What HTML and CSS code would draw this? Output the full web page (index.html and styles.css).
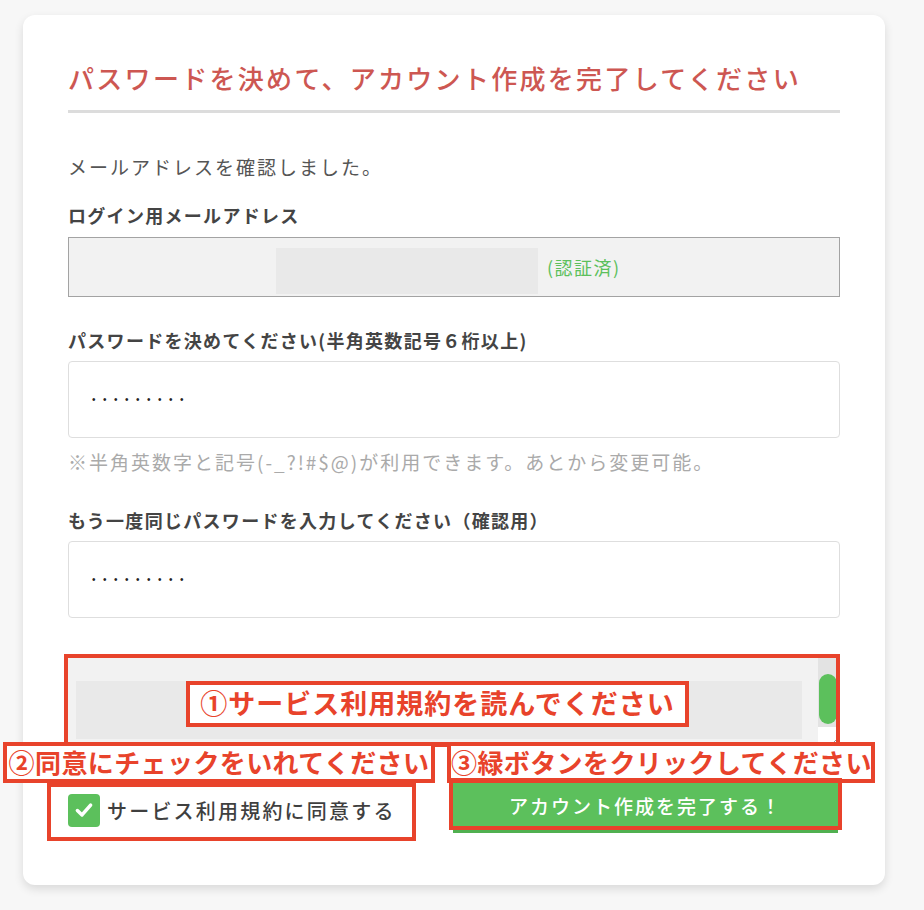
FILE: index.html
```html
<!DOCTYPE html>
<html lang="ja">
<head>
<meta charset="utf-8">
<title>パスワード設定</title>
<link rel="stylesheet" href="styles.css">
</head>
<body>
<div class="page">
  <div class="card">
    <h1 class="title">パスワードを決めて、アカウント作成を完了してください</h1>
    <p class="lead">メールアドレスを確認しました。</p>

    <div class="label label-first">ログイン用メールアドレス</div>
    <div class="email-box">
      <span class="email-mask"></span>
      <span class="verified">(認証済)</span>
    </div>

    <div class="label label-gap">パスワードを決めてください(半角英数記号６桁以上)</div>
    <div class="field"><span class="dots">•••••••••</span></div>
    <p class="hint">※半角英数字と記号(-_?!#$@)が利用できます。あとから変更可能。</p>

    <div class="label label-gap2">もう一度同じパスワードを入力してください（確認用）</div>
    <div class="field"><span class="dots">•••••••••</span></div>

    <div class="terms">
      <div class="terms-body"><div class="terms-mask"></div></div>
      <div class="terms-scroll">
        <div class="track"><div class="thumb"></div></div>
        <div class="corner">
          <svg width="10" height="10" viewBox="0 0 10 10"><path d="M9 3 L3 9 M9 7 L7 9" stroke="#999" stroke-width="1" fill="none"/></svg>
        </div>
      </div>
    </div>

    <div class="actions">
      <label class="agree">
        <span class="check">
          <svg width="22" height="22" viewBox="0 0 20 20"><path d="M4 10.5 L8.2 14.5 L16 5.5" stroke="#fff" stroke-width="3.2" fill="none" stroke-linecap="round" stroke-linejoin="round"/></svg>
        </span>
        <span class="agree-text">サービス利用規約に同意する</span>
      </label>
      <button class="submit" type="button">アカウント作成を完了する！</button>
    </div>

    <div class="note note-1"><div class="note-label note-label-1">①サービス利用規約を読んでください</div></div>
    <div class="note-link"></div>
    <div class="note note-2">②同意にチェックをいれてください</div>
    <div class="note note-3">③緑ボタンをクリックしてください</div>
    <div class="note note-4"></div>
    <div class="note note-5"></div>
  </div>
</div>
</body>
</html>
```

FILE: styles.css
```css
* { box-sizing: border-box; }

html, body {
  margin: 0;
  padding: 0;
  background: #f7f7f7;
}

body {
  font-family: "Noto Sans CJK JP", "Noto Sans", sans-serif;
  color: #555;
}

.page {
  padding: 15px 39px 25px 23px;
}

.card {
  position: relative;
  width: 862px;
  height: 870px;
  background: #fff;
  border-radius: 12px;
  box-shadow: 0 4px 10px rgba(0, 0, 0, 0.12);
  padding: 45px 45px 0 45px;
}

.title {
  margin: 0;
  font-size: 26px;
  line-height: 36px;
  font-weight: 500;
  letter-spacing: 2.3px;
  color: #cd5752;
  padding-bottom: 14px;
  border-bottom: 3px solid #dcdcdc;
  white-space: nowrap;
}

.lead {
  margin: 40px 0 0;
  font-size: 19px;
  line-height: 28px;
  letter-spacing: 2px;
  color: #555;
}

.label {
  font-size: 18px;
  line-height: 26px;
  font-weight: 700;
  letter-spacing: 1.3px;
  color: #444;
  white-space: nowrap;
}

.label-first { margin-top: 21px; }
.label-gap { margin-top: 30px; }
.label-gap2 { margin-top: 32px; }

.email-box {
  margin-top: 9px;
  height: 60px;
  background: #f2f2f2;
  border: 1px solid #a3a3a3;
  display: flex;
  align-items: center;
  padding-left: 207px;
}

.email-mask {
  display: block;
  width: 262px;
  height: 46px;
  margin-top: 8px;
  background: #e9e9e9;
}

.verified {
  margin-left: 9px;
  font-size: 18px;
  letter-spacing: 1.5px;
  color: #5cc05c;
}

.field {
  margin-top: 8px;
  height: 77px;
  border: 1px solid #dedede;
  border-radius: 4px;
  display: flex;
  align-items: center;
  padding-left: 23px;
}

.dots {
  font-family: "Liberation Sans", sans-serif;
  font-size: 10px;
  letter-spacing: 7.5px;
  color: #222;
}

.hint {
  margin: 11px 0 0;
  font-size: 19px;
  line-height: 26px;
  letter-spacing: 2px;
  color: #aaa;
  white-space: nowrap;
}

.terms {
  margin-top: 39px;
  width: 770px;
  height: 89px;
  background: #f2f2f2;
  border-top: 1px solid #e4e4e4;
  display: flex;
}

.terms-body {
  flex: 1;
  padding: 23px 16px 0 8px;
}

.terms-mask {
  height: 58px;
  background: #e9e9e9;
}

.terms-scroll {
  width: 20px;
  display: flex;
  flex-direction: column;
}

.track {
  flex: 1;
  background: #e3e3e3;
  padding: 16px 1px 0;
}

.thumb {
  height: 50px;
  background: #5cc05c;
  border-radius: 9px;
}

.corner {
  height: 19px;
  background: #fff;
  display: flex;
  align-items: flex-end;
  justify-content: flex-end;
}

.actions {
  margin-top: 35px;
  display: flex;
  align-items: center;
  justify-content: space-between;
  padding-right: 2px;
}

.agree {
  display: flex;
  align-items: center;
  margin-top: 6px;
}

.check {
  width: 32px;
  height: 33px;
  background: #5cc05c;
  border-radius: 4px;
  display: flex;
  align-items: center;
  justify-content: center;
}

.agree-text {
  margin-left: 7px;
  font-size: 20px;
  font-weight: 500;
  letter-spacing: 2.2px;
  color: #3f3f3f;
}

.submit {
  width: 385px;
  height: 52px;
  border: 0;
  border-bottom: 3px solid #50b050;
  background: #5cc05c;
  color: #fff;
  font-family: "Noto Sans CJK JP", sans-serif;
  font-size: 19px;
  font-weight: 500;
  letter-spacing: 2px;
  padding: 0;
}

/* annotation overlays */
.note {
  position: absolute;
  border: 4px solid #e8432b;
  color: #e8432b;
  font-weight: 700;
  white-space: nowrap;
}

.note-1 {
  left: 41px;
  top: 639px;
  width: 776px;
  height: 93px;
}

.note-label {
  position: absolute;
  left: 118px;
  top: 23px;
  width: 503px;
  height: 46px;
  background: #fff;
  border: 4px solid #e8432b;
  font-size: 27px;
  line-height: 36px;
  letter-spacing: 1px;
  text-align: center;
}

.note-2, .note-3 {
  top: 727px;
  height: 41px;
  background: #fff;
  font-size: 26px;
  line-height: 32px;
  letter-spacing: 0.4px;
  text-align: center;
}

.note-2 { left: -20px; width: 432px; }
.note-3 { left: 424px; width: 428px; }

.note-link {
  position: absolute;
  left: 410px;
  top: 727px;
  width: 16px;
  height: 5px;
  background: #e8432b;
}

.note-4 {
  left: 24px;
  top: 768px;
  width: 369px;
  height: 58px;
}

.note-5 {
  left: 426px;
  top: 763px;
  width: 393px;
  height: 52px;
}
```
